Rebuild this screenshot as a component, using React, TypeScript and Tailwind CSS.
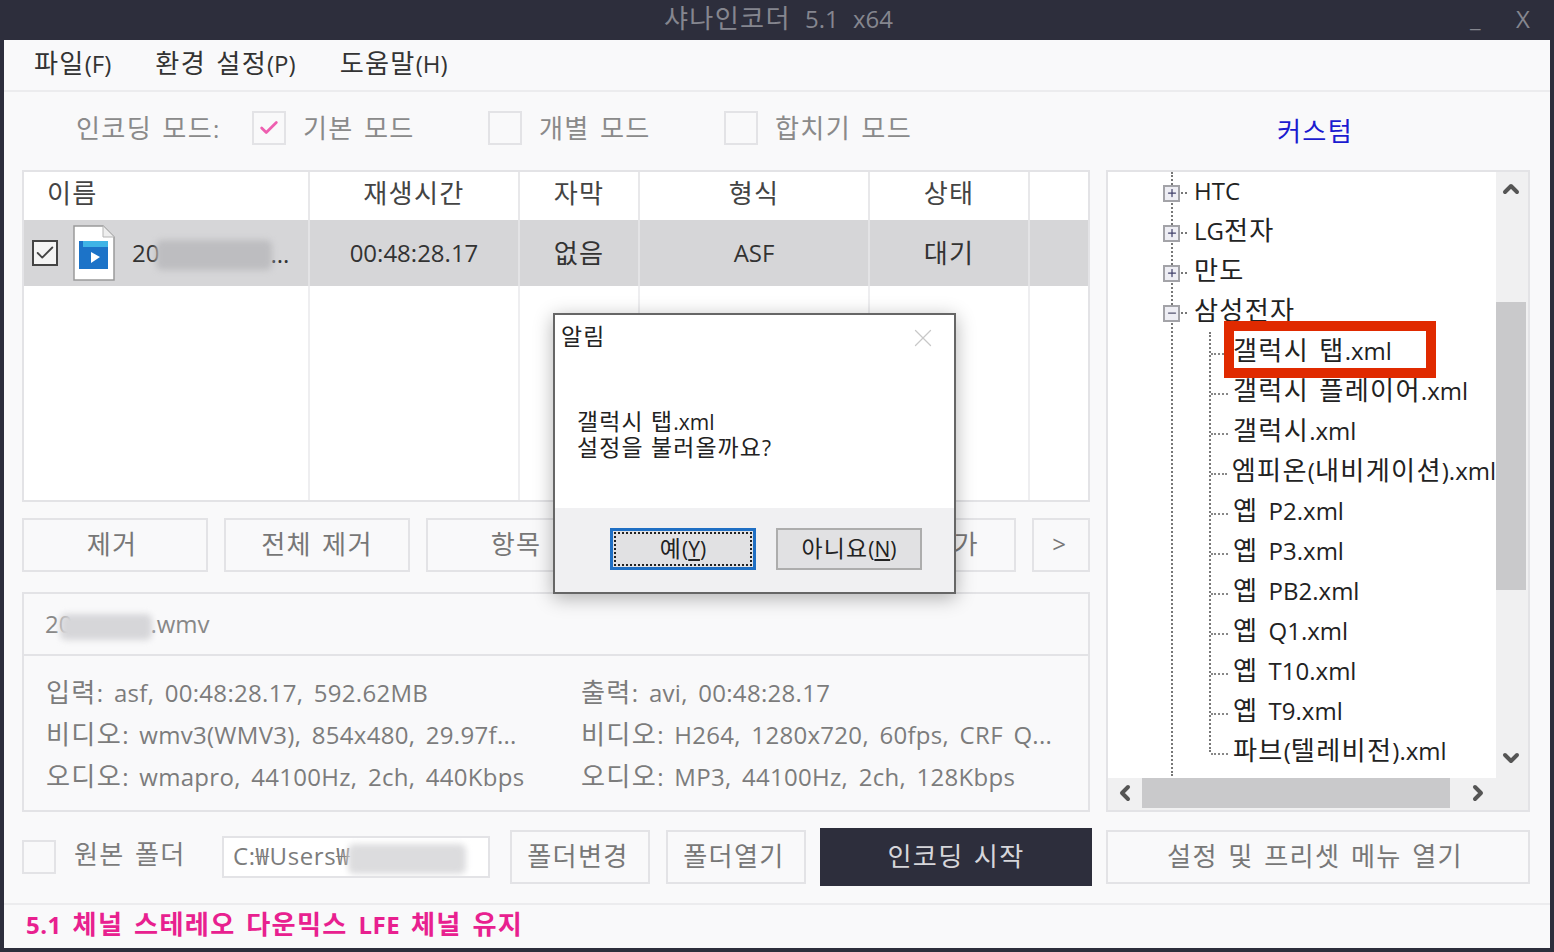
import React from 'react';
import { ChevronUp, ChevronDown, ChevronLeft, ChevronRight, Plus, Minus, Check, X } from 'lucide-react';

// hangul runs sit a little larger and wider than the latin around them, like Malgun Gothic
function T({ children }: { children: string }) {
  const parts = children.split(/([\uAC00-\uD7A3]+)/);
  return (
    <span>
      {parts.map((p, i) =>
        /[\uAC00-\uD7A3]/.test(p) ? (
          <span key={i} className="text-[1.09em] tracking-[0.05em]">{p}</span>
        ) : (
          <span key={i}>{p}</span>
        )
      )}
    </span>
  );
}

function ModeBox({ checked }: { checked?: boolean }) {
  return (
    <div className="w-[34px] h-[34px] border-2 border-[#e3e3e6] flex items-center justify-center shrink-0">
      {checked && <Check className="w-[22px] h-[22px] text-[#ee5fb0]" strokeWidth={3} />}
    </div>
  );
}

function Btn({ label, className }: { label: string; className: string }) {
  return (
    <div className={`h-[54px] border-2 border-[#e3e3e6] flex items-center justify-center pb-[2px] text-[#777] ${className}`}>
      <T>{label}</T>
    </div>
  );
}

function FileIcon() {
  return (
    <svg width="42" height="56" viewBox="0 0 42 56" className="shrink-0">
      <path d="M1 1H30L41 12V55H1Z" fill="#fff" stroke="#9a9a9a" strokeWidth="1.5" />
      <path d="M30 1V12H41" fill="#eee" stroke="#b5b5b5" />
      <rect x="6" y="16" width="29" height="28" fill="#1c73c8" />
      <rect x="10" y="16" width="25" height="6" fill="#3fb4e6" />
      <path d="M18 27L27 32L18 38Z" fill="#fff" />
    </svg>
  );
}

function Blur({ className }: { className: string }) {
  return <div className={`absolute blur-[3px] rounded-md ${className}`} />;
}

const columns = 'grid grid-cols-[286px_210px_120px_230px_160px_1fr]';

const treeRoots = [
  { label: 'HTC', open: false },
  { label: 'LG전자', open: false },
  { label: '만도', open: false },
  { label: '삼성전자', open: true },
];

const treeFiles = [
  '갤럭시 탭.xml',
  '갤럭시 플레이어.xml',
  '갤럭시.xml',
  '엠피온(내비게이션).xml',
  '옙 P2.xml',
  '옙 P3.xml',
  '옙 PB2.xml',
  '옙 Q1.xml',
  '옙 T10.xml',
  '옙 T9.xml',
  '파브(텔레비전).xml',
];

export default function App() {
  return (
    <div
      className="relative w-[1554px] h-[952px] bg-[#2d2e3c] flex flex-col overflow-hidden text-[24px] leading-none [word-spacing:4px]"
      style={{ fontFamily: '"Open Sans", "Noto Sans CJK KR", sans-serif' }}
    >
      {/* Title bar */}
      <div className="h-[40px] shrink-0 flex items-center justify-center relative text-[#85868f]">
        <span className="ml-[3px] -mt-[3px] [word-spacing:8px]"><T>샤나인코더 5.1 x64</T></span>
        <span className="absolute left-[1470px] top-[6px]">_</span>
        <span className="absolute left-[1516px] top-[7px]">X</span>
      </div>

      <div className="mx-1 mb-1 flex-1 bg-[#f9f9fa] flex flex-col min-h-0">
        {/* Menu */}
        <div className="h-[52px] shrink-0 border-b-2 border-[#ececee] flex items-center pl-[30px] pb-[4px] gap-[44px] text-[#333]">
          <T>파일(F)</T>
          <T>환경 설정(P)</T>
          <T>도움말(H)</T>
        </div>

        {/* Encoding mode */}
        <div className="h-[78px] shrink-0 flex items-center text-[#8a8a8a] pb-[6px]">
          <span className="ml-[72px] w-[176px]"><T>인코딩 모드:</T></span>
          <ModeBox checked />
          <span className="ml-[17px] w-[185px]"><T>기본 모드</T></span>
          <ModeBox />
          <span className="ml-[17px] w-[185px]"><T>개별 모드</T></span>
          <ModeBox />
          <span className="ml-[17px] w-[502px]"><T>합치기 모드</T></span>
          <span className="text-[#1b1bd0] mt-[6px]"><T>커스텀</T></span>
        </div>

        <div className="flex gap-[16px] pl-[18px] pr-[20px] items-start">
          {/* Left column */}
          <div className="w-[1068px] shrink-0 flex flex-col">
            {/* File list */}
            <div className="h-[332px] border-2 border-[#e3e3e6] bg-white flex flex-col text-[#444]">
              <div className={`${columns} h-[48px] shrink-0`}>
                <div className="border-r-2 border-[#e8e8ea] flex items-center pl-[23px] pb-[5px]"><T>이름</T></div>
                <div className="border-r-2 border-[#e8e8ea] flex items-center justify-center pb-[5px]"><T>재생시간</T></div>
                <div className="border-r-2 border-[#e8e8ea] flex items-center justify-center pb-[5px]"><T>자막</T></div>
                <div className="border-r-2 border-[#e8e8ea] flex items-center justify-center pb-[5px]"><T>형식</T></div>
                <div className="border-r-2 border-[#e8e8ea] flex items-center justify-center pb-[5px]"><T>상태</T></div>
                <div />
              </div>
              <div className={`${columns} h-[66px] shrink-0 bg-[#d6d6d8] text-[#333]`}>
                <div className="relative border-r-2 border-[#e3e3e5] flex items-center pl-[8px]">
                  <div className="w-[26px] h-[26px] border-2 border-[#444] bg-[#f4f4f4] flex items-center justify-center shrink-0">
                    <Check className="w-[22px] h-[22px] text-[#444]" strokeWidth={2} />
                  </div>
                  <div className="ml-[15px]"><FileIcon /></div>
                  <span className="ml-[17px]">20</span>
                  <span className="ml-[111px] mt-[2px]">...</span>
                  <Blur className="left-[132px] top-[20px] w-[116px] h-[30px] bg-[#bdbdc0]" />
                </div>
                <div className="border-r-2 border-[#e3e3e5] flex items-center justify-center">00:48:28.17</div>
                <div className="border-r-2 border-[#e3e3e5] flex items-center justify-center"><T>없음</T></div>
                <div className="border-r-2 border-[#e3e3e5] flex items-center justify-center">ASF</div>
                <div className="border-r-2 border-[#e3e3e5] flex items-center justify-center"><T>대기</T></div>
                <div />
              </div>
              <div className={`${columns} flex-1`}>
                <div className="border-r-2 border-[#eeeef0]" />
                <div className="border-r-2 border-[#eeeef0]" />
                <div className="border-r-2 border-[#eeeef0]" />
                <div className="border-r-2 border-[#eeeef0]" />
                <div className="border-r-2 border-[#eeeef0]" />
                <div />
              </div>
            </div>

            {/* List buttons */}
            <div className="flex gap-[16px] mt-[16px]">
              <Btn label="제거" className="w-[186px] pr-[6px]" />
              <Btn label="전체 제거" className="w-[186px]" />
              <Btn label="항목" className="w-[186px] pr-[6px]" />
              <Btn label="" className="w-[186px]" />
              <Btn label="파일 추가" className="w-[186px]" />
              <Btn label=">" className="w-[58px] pr-[4px]" />
            </div>

            {/* File info */}
            <div className="mt-[20px] h-[220px] border-2 border-[#e3e3e6] text-[#888] flex flex-col">
              <div className="relative h-[62px] shrink-0 border-b-2 border-[#e3e3e6] flex items-center pl-[21px]">
                <span>20</span>
                <span className="ml-[78px]">.wmv</span>
                <Blur className="left-[36px] top-[20px] w-[92px] h-[26px] bg-[#d6d6d9]" />
              </div>
              <div className="grid grid-cols-[535px_1fr] pl-[22px] pt-[23px] gap-y-[16px] text-[#7c7c7c] tracking-[0.3px]">
                <T>입력: asf, 00:48:28.17, 592.62MB</T>
                <T>출력: avi, 00:48:28.17</T>
                <T>비디오: wmv3(WMV3), 854x480, 29.97f...</T>
                <T>비디오: H264, 1280x720, 60fps, CRF Q...</T>
                <T>오디오: wmapro, 44100Hz, 2ch, 440Kbps</T>
                <T>오디오: MP3, 44100Hz, 2ch, 128Kbps</T>
              </div>
            </div>
          </div>

          {/* Preset tree */}
          <div className="relative w-[424px] h-[642px] shrink-0 border-2 border-[#e3e3e6] bg-[#f0f0f1] overflow-hidden">
            <div className="absolute left-0 top-0 w-[388px] h-[606px] bg-white overflow-hidden text-[#222]">
              <div className="absolute left-[63px] top-0 h-[604px] border-l-2 border-dotted border-[#777]" />
              <div className="absolute left-[101px] top-[160px] h-[420px] border-l-2 border-dotted border-[#777]" />
              <div className="relative">
                {treeRoots.map((r) => (
                  <div key={r.label} className="h-[40px] flex items-center pl-[55px]">
                    <div className="w-[17px] h-[17px] border-2 border-[#a3a3a8] bg-[#eeeef4] flex items-center justify-center shrink-0 mt-[2px]">
                      {r.open ? (
                        <Minus className="w-[12px] h-[12px] text-[#555570]" strokeWidth={2.5} />
                      ) : (
                        <Plus className="w-[12px] h-[12px] text-[#41416a]" strokeWidth={2.5} />
                      )}
                    </div>
                    <div className="w-[6px] ml-[1px] border-t-2 border-dotted border-[#777] mt-[2px]" />
                    <span className="ml-[7px] -mt-[3px] whitespace-nowrap"><T>{r.label}</T></span>
                  </div>
                ))}
                {treeFiles.map((f) => (
                  <div key={f} className="h-[40px] flex items-center pl-[103px]">
                    <div className="w-[17px] border-t-2 border-dotted border-[#888] mt-[4px]" />
                    <span className="ml-[5px] -mt-[3px] whitespace-nowrap"><T>{f}</T></span>
                  </div>
                ))}
              </div>
            </div>

            {/* Red highlight over the first file */}
            <div className="absolute left-[116px] top-[149px] w-[212px] h-[57px] border-[10px] border-[#e02a00]" />

            {/* Scrollbars */}
            <div className="absolute left-[388px] top-0 w-[30px] h-[606px]">
              <ChevronUp className="absolute left-[3px] top-[5px] w-[24px] h-[24px] text-[#555]" strokeWidth={4} />
              <div className="absolute left-0 top-[130px] w-[30px] h-[288px] bg-[#c9c9cb]" />
              <ChevronDown className="absolute left-[3px] top-[574px] w-[24px] h-[24px] text-[#555]" strokeWidth={4} />
            </div>
            <div className="absolute left-0 top-[606px] w-[418px] h-[30px]">
              <ChevronLeft className="absolute left-[5px] top-[3px] w-[24px] h-[24px] text-[#555]" strokeWidth={4} />
              <div className="absolute left-[34px] top-0 w-[308px] h-[30px] bg-[#c9c9cb]" />
              <ChevronRight className="absolute left-[358px] top-[3px] w-[24px] h-[24px] text-[#555]" strokeWidth={4} />
            </div>
          </div>
        </div>

        {/* Output row */}
        <div className="mt-[16px] h-[58px] shrink-0 flex items-center pl-[18px] text-[#7c7c7c]">
          <ModeBox />
          <span className="ml-[18px] w-[148px] -mt-[6px]"><T>원본 폴더</T></span>
          <div className="relative w-[268px] h-[42px] border-2 border-[#e3e3e6] bg-white flex items-center pl-[9px] pb-[2px] overflow-hidden whitespace-nowrap">
            <span className="tracking-[0.6px]">C:₩Users₩</span>
            <Blur className="left-[124px] top-[6px] w-[118px] h-[30px] bg-[#dcdcde]" />
          </div>
          <Btn label="폴더변경" className="w-[140px] ml-[20px] pr-[4px]" />
          <Btn label="폴더열기" className="w-[140px] ml-[16px] pr-[4px]" />
          <div className="w-[272px] h-[58px] ml-[14px] bg-[#2d2e3c] text-[#d6d6da] flex items-center justify-center pb-[2px]">
            <T>인코딩 시작</T>
          </div>
          <Btn label="설정 및 프리셋 메뉴 열기" className="w-[424px] ml-[14px] pr-[6px] tracking-[0.3px]" />
        </div>

        {/* Status */}
        <div className="mt-[17px] flex-1 border-t-2 border-[#ececee] flex items-center pl-[22px] text-[#e8208f] font-bold pb-[5px] tracking-[0.5px]">
          <T>5.1 체널 스테레오 다운믹스 LFE 체널 유지</T>
        </div>
      </div>

      {/* Dialog */}
      <div className="absolute left-[553px] top-[313px] w-[403px] h-[281px] border-2 border-[#666] bg-white shadow-[0_4px_18px_rgba(0,0,0,0.3)] flex flex-col text-[21px] text-[#222] [word-spacing:2px]">
        <div className="h-[193px] relative pl-[22px]">
          <span className="absolute left-[6px] top-[11px]"><T>알림</T></span>
          <X className="absolute left-[353px] top-[8px] w-[30px] h-[30px] text-[#c8c8c8]" strokeWidth={1} />
          <div className="absolute left-[22px] top-[94px] leading-[26px]">
            <div><T>갤럭시 탭.xml</T></div>
            <div><T>설정을 불러올까요?</T></div>
          </div>
        </div>
        <div className="flex-1 bg-[#f0f0f2] flex items-start pl-[55px] pt-[20px] gap-[20px]">
          <div className="w-[146px] h-[42px] border-[3px] border-[#1f6fc4] bg-[#e1e1e3] p-px">
            <div className="w-full h-full border-2 border-dotted border-[#222] flex items-center justify-center">
              <span><T>예</T>(<u>Y</u>)</span>
            </div>
          </div>
          <div className="w-[146px] h-[42px] border-2 border-[#adadad] bg-[#e1e1e3] flex items-center justify-center">
            <span><T>아니요</T>(<u>N</u>)</span>
          </div>
        </div>
      </div>
    </div>
  );
}
